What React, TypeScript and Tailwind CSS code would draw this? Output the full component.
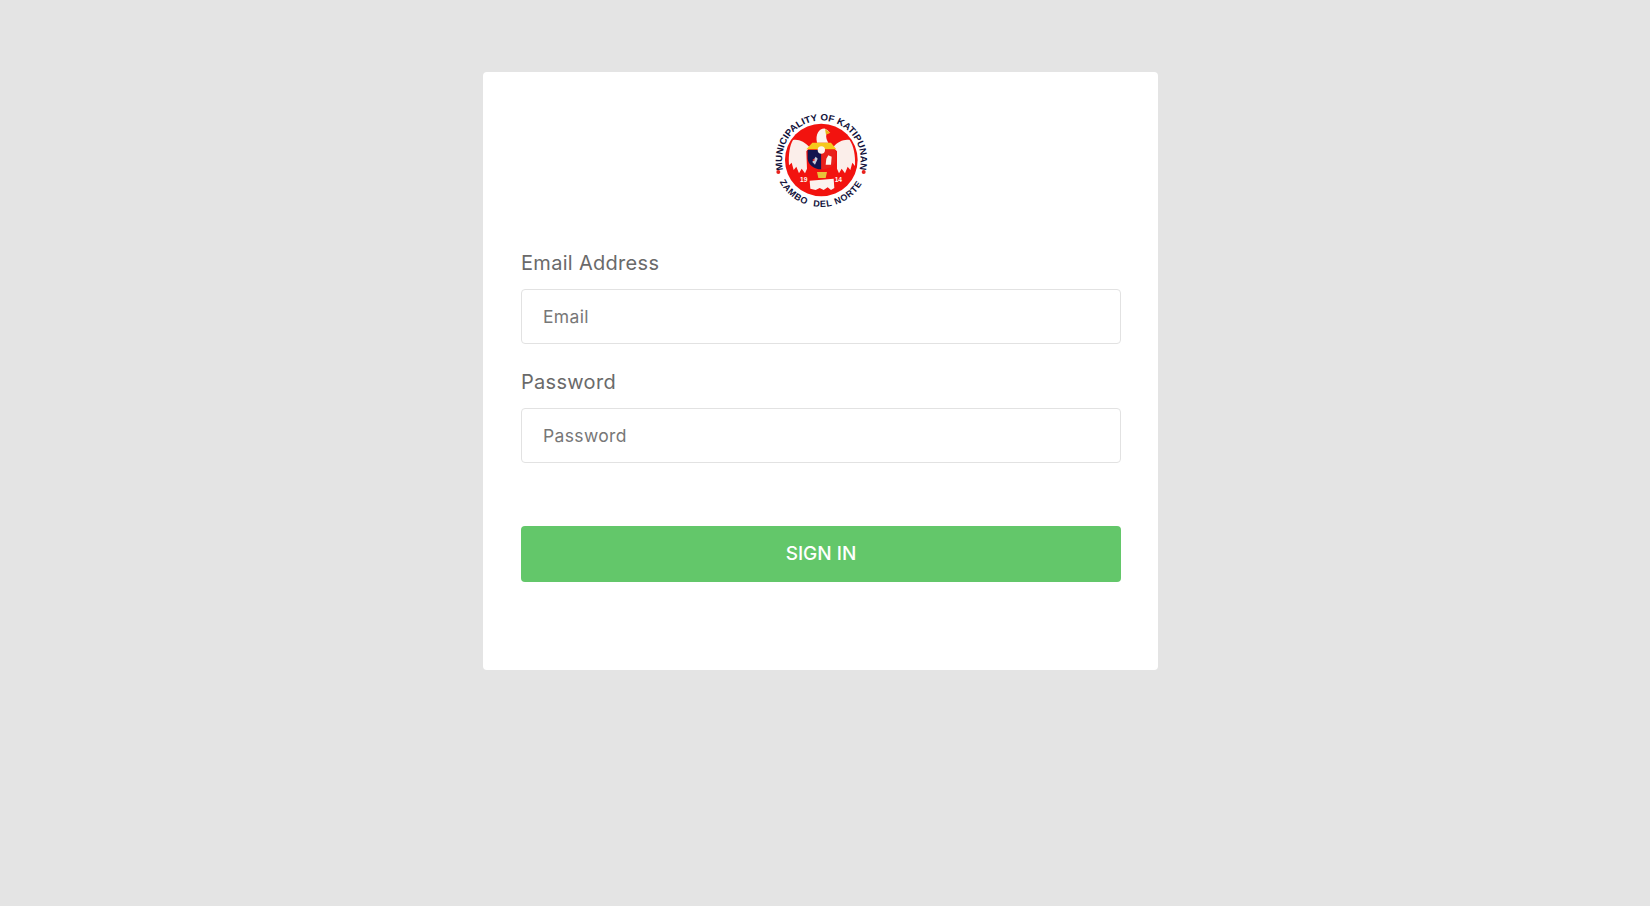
const Logo = () => (
  <svg viewBox="0 0 300 300" width="100" height="100" aria-label="Municipality of Katipunan seal">
    <defs>
      <path id="sealTop" d="M 37 180 A 118 118 0 1 1 265 180" />
      <path id="sealBottom" d="M 26 215 A 141 141 0 0 0 276 215" />
    </defs>
    <circle cx="151" cy="150" r="109" fill="#f2130f" />
    {/* wings */}
    <path
      d="M 116 112 C 102 96 82 86 66 90 C 56 106 52 135 54 166 L 62 158 L 68 180 L 76 170 L 84 190 L 92 176 L 102 190 L 108 176 L 106 124 Z"
      fill="#fbeeea"
    />
    <path
      d="M 186 112 C 200 94 222 86 236 90 C 248 108 254 136 252 168 L 244 158 L 238 180 L 230 170 L 222 190 L 212 176 L 204 190 L 198 176 L 198 124 Z"
      fill="#fbeeea"
    />
    {/* head */}
    <path
      d="M 138 98 C 132 72 146 54 162 56 C 168 58 172 62 176 68 L 166 72 C 164 84 168 92 172 98 Z"
      fill="#fbf3ef"
    />
    <path d="M 162 57 L 178 68 L 165 74 Z" fill="#e8b81a" />
    {/* shield */}
    <path d="M 106 118 L 124 98 L 180 98 L 196 118 Z" fill="#f5c91c" />
    <path d="M 110 120 L 151 120 L 151 178 C 128 178 112 164 110 146 Z" fill="#14144f" />
    <path d="M 151 120 L 194 120 L 194 150 C 192 166 176 178 151 178 Z" fill="#e8211c" />
    <circle cx="151" cy="120" r="11" fill="#fdf6ee" />
    <path d="M 124 156 L 134 140 L 140 146 L 132 164 Z" fill="#e9e6ee" opacity="0.85" />
    <circle cx="128" cy="150" r="3" fill="#e8211c" />
    <path d="M 164 164 L 166 146 L 172 136 L 182 140 L 180 164 Z" fill="#fdf6ee" />
    <path d="M 138 186 L 168 186 L 164 204 L 142 204 Z" fill="#e8c23a" />
    {/* tail */}
    <path
      d="M 116 212 L 188 206 L 190 234 L 180 240 L 170 232 L 158 240 L 146 234 L 134 240 L 118 236 Z"
      fill="#fbf3ef"
    />
    <text x="87" y="217" fill="#fdf6ee" fontSize="20" fontWeight="700" fontFamily="Liberation Sans, sans-serif">
      19
    </text>
    <text x="191" y="217" fill="#fdf6ee" fontSize="20" fontWeight="700" fontFamily="Liberation Sans, sans-serif">
      14
    </text>
    <circle cx="22" cy="186" r="6" fill="#e8211c" />
    <circle cx="278" cy="186" r="6" fill="#e8211c" />
    <text fill="#10103a" fontSize="28" fontWeight="700" fontFamily="Liberation Sans, sans-serif">
      <textPath href="#sealTop" textLength="431" lengthAdjust="spacingAndGlyphs">
        MUNICIPALITY OF KATIPUNAN
      </textPath>
    </text>
    <text fill="#10103a" fontSize="27" fontWeight="700" fontFamily="Liberation Sans, sans-serif" xmlSpace="preserve">
      <textPath href="#sealBottom" textLength="300" lengthAdjust="spacing">
        ZAMBO  DEL NORTE
      </textPath>
    </text>
  </svg>
);

const Field = ({ label, placeholder, type }: { label: string; placeholder: string; type: string }) => (
  <div className="flex flex-col">
    <label className="mb-[11px] text-[20px] leading-[30px] tracking-[0.3px] text-[#6a6a6a]">{label}</label>
    <input
      type={type}
      placeholder={placeholder}
      className="h-[55px] w-full rounded-[4px] border border-[#e2e2e2] bg-white px-[21px] pb-[1px] text-[17.5px] tracking-[0.35px] outline-none placeholder:text-[#777777]"
    />
  </div>
);

export default function App() {
  return (
    <div className="flex min-h-[906px] justify-center bg-[#e4e4e4] pt-[72px] pr-[9px] font-['Inter',sans-serif]">
      <div className="h-[598px] w-[675px] rounded-[4px] bg-white pt-[38px] pr-[37px] pl-[38px]">
        <div className="flex justify-center">
          <Logo />
        </div>
        <form className="mt-[38px] flex flex-col gap-[23px]">
          <Field label="Email Address" placeholder="Email" type="email" />
          <Field label="Password" placeholder="Password" type="password" />
          <button
            type="button"
            className="mt-[40px] h-[56px] w-full rounded-[4px] bg-[#63c76a] pt-[1px] text-[19px] font-medium text-white"
          >
            SIGN IN
          </button>
        </form>
      </div>
    </div>
  );
}
